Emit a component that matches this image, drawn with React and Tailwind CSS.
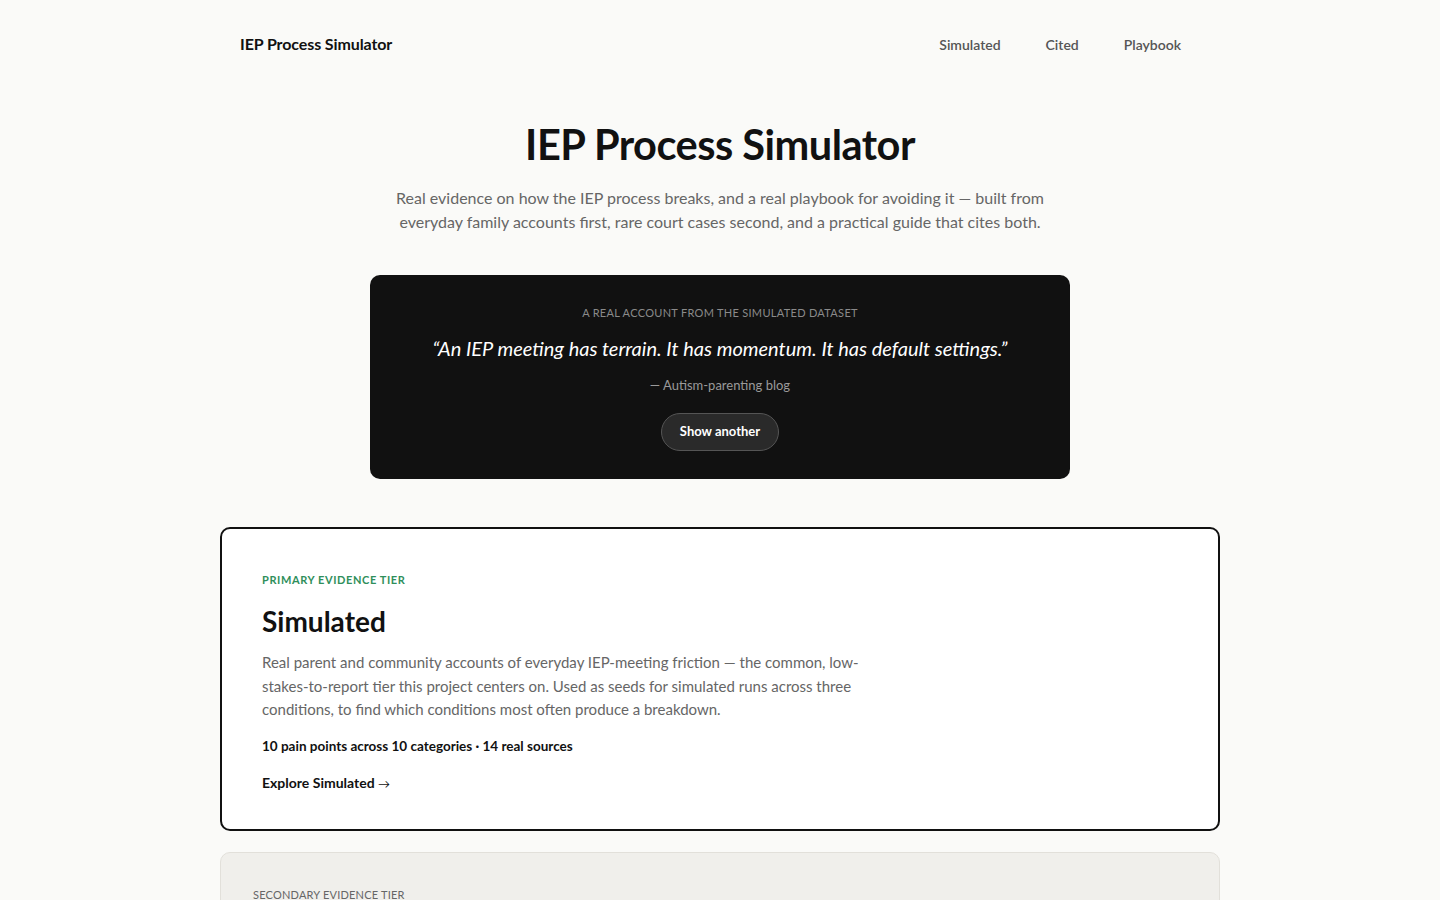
import React from "react";

const font = { fontFamily: "Lato, 'Noto Sans', sans-serif" };

function Nav() {
  return (
    <header className="flex items-center justify-between px-5 h-[88px]">
      <a className="text-[16px] font-bold text-[#111] tracking-[-0.1px]">IEP Process Simulator</a>
      <nav className="flex items-center gap-[45px] pr-[19px] text-[14px] text-[#555] font-semibold">
        <a>Simulated</a>
        <a>Cited</a>
        <a>Playbook</a>
      </nav>
    </header>
  );
}

function Hero() {
  return (
    <section className="flex flex-col items-center text-center pt-[32px]">
      <h1 className="text-[41.5px] leading-[48px] font-bold text-[#111] tracking-[-0.5px]">IEP Process Simulator</h1>
      <p className="mt-[18px] max-w-[680px] text-[16px] leading-[24px] text-[#666]">
        Real evidence on how the IEP process breaks, and a real playbook for avoiding it — built from everyday family accounts first, rare court cases second, and a practical guide that cites both.
      </p>
    </section>
  );
}

function QuoteCard() {
  return (
    <div className="mx-auto mt-[41px] w-[700px] h-[204px] rounded-[10px] bg-[#111] flex flex-col items-center pt-[30px]">
      <div className="text-[11px] leading-[16px] tracking-[0.3px] uppercase text-[#8a8a8a]">A real account from the simulated dataset</div>
      <blockquote className="mt-[13px] text-[20px] leading-[28px] italic text-white">
        “An IEP meeting has terrain. It has momentum. It has default settings.”
      </blockquote>
      <div className="mt-[14px] text-[13px] leading-[18px] text-[#9a9a9a]">— Autism-parenting blog</div>
      <button className="mt-[19px] h-[38px] px-[18px] rounded-full bg-[#2a2a2a] border border-[#555] text-[13px] font-bold text-white">
        Show another
      </button>
    </div>
  );
}

function PrimaryCard() {
  return (
    <div className="mt-[48px] rounded-[10px] border-2 border-[#111] bg-white pl-[40px] pt-[43px] h-[304px]">
      <div className="text-[11px] leading-[16px] font-bold uppercase tracking-[0.6px] text-[#2f8f5b]">Primary evidence tier</div>
      <h2 className="mt-[15px] text-[28px] leading-[36px] font-bold text-[#111]">Simulated</h2>
      <p className="mt-[12px] max-w-[610px] text-[15px] leading-[23.5px] text-[#666]">
        Real parent and community accounts of everyday IEP-meeting friction — the common, low-stakes-to-report tier this project centers on. Used as seeds for simulated runs across three conditions, to find which conditions most often produce a breakdown.
      </p>
      <div className="mt-[15px] text-[13.5px] leading-[18px] font-bold text-[#111]">10 pain points across 10 categories · 14 real sources</div>
      <a className="block mt-[19px] text-[14px] leading-[18px] font-bold text-[#111]">Explore Simulated <span className="font-normal text-[12px]">→</span></a>
    </div>
  );
}

function SecondaryCard() {
  return (
    <div className="mt-[21px] rounded-t-[10px] border border-[#e2e0da] bg-[#f0efeb] pl-[32px] pt-[34px] h-[200px]">
      <div className="text-[11px] leading-[16px] uppercase tracking-[0.2px] text-[#666]">Secondary evidence tier</div>
    </div>
  );
}

export default function App() {
  return (
    <div className="min-h-screen bg-[#fafaf8] overflow-hidden" style={font}>
      <div className="w-[1000px] mx-auto">
        <Nav />
        <Hero />
        <QuoteCard />
        <PrimaryCard />
        <SecondaryCard />
      </div>
    </div>
  );
}
